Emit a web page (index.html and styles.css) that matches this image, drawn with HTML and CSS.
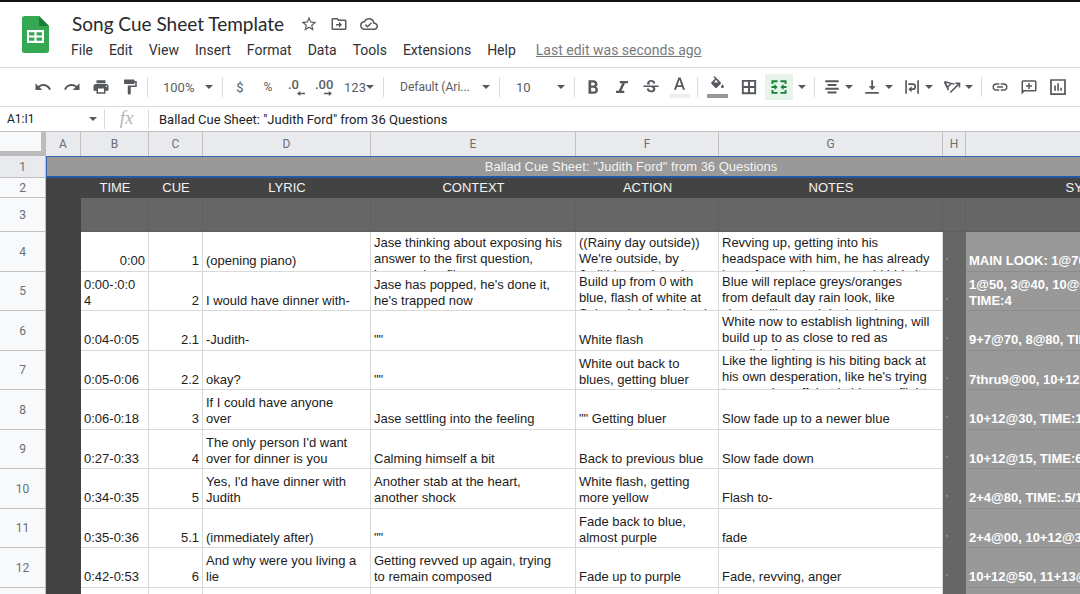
FILE: index.html
```html
<!DOCTYPE html>
<html lang="en">
<head>
<meta charset="utf-8">
<title>Song Cue Sheet Template</title>
<link rel="stylesheet" href="styles.css">
</head>
<body>
<div class="app">
<header class="header">
  <svg class="logo" viewBox="0 0 27 37" aria-hidden="true"><path fill="#34a853" d="M2.500 0H17l10 10v24.500a2.500 2.500 0 0 1-2.500 2.500h-22A2.500 2.500 0 0 1 0 34.500v-32A2.500 2.500 0 0 1 2.500 0z"/><path fill="#188038" d="M17 0l10 10H17z"/><path fill="#fff" fill-rule="evenodd" d="M5 14h17v13H5zM7 16.200v3.200h5.400v-3.200zm7.600 0v3.200H20v-3.200zM7 21.600v3.200h5.400v-3.200zm7.600 0v3.200H20v-3.200z"/></svg>
  <div class="heading">
    <div class="title-row">
      <h1 class="title">Song Cue Sheet Template</h1>
      <button class="title-btn" aria-label="Star"><svg viewBox="0 0 24 24"><path d="M22 9.240l-7.190-.62L12 2 9.190 8.630 2 9.240l5.460 4.730L5.820 21 12 17.270 18.180 21l-1.630-7.030L22 9.240zM12 15.400l-3.760 2.270 1-4.280-3.320-2.880 4.380-.38L12 6.100l1.710 4.040 4.380.38-3.320 2.880 1 4.280L12 15.400z"/></svg></button>
      <button class="title-btn" aria-label="Move"><svg viewBox="0 0 24 24"><path d="M20 6h-8l-2-2H4c-1.100 0-2 .9-2 2v12c0 1.100.9 2 2 2h16c1.100 0 2-.9 2-2V8c0-1.100-.9-2-2-2zm0 12H4V6h5.170l2 2H20v10zm-8-1l4-4-4-4v3H8v2h4z"/></svg></button>
      <button class="title-btn" aria-label="Document status"><svg viewBox="0 0 24 24"><path d="M19.350 10.040A7.490 7.490 0 0 0 12 4C9.110 4 6.600 5.640 5.350 8.040A5.994 5.994 0 0 0 0 14c0 3.310 2.690 6 6 6h13c2.760 0 5-2.240 5-5 0-2.640-2.050-4.780-4.650-4.960zM19 18H6c-2.210 0-4-1.790-4-4 0-2.050 1.530-3.760 3.560-3.970l1.070-.11.5-.95A5.469 5.469 0 0 1 12 6c2.620 0 4.880 1.860 5.390 4.430l.3 1.500 1.530.11A2.980 2.980 0 0 1 22 15c0 1.650-1.350 3-3 3zm-9-3.820l-2.090-2.090L6.500 13.500 10 17l6.010-6.010-1.410-1.410z"/></svg></button>
    </div>
    <nav class="menus">
      <button>File</button><button>Edit</button><button>View</button><button>Insert</button><button>Format</button><button>Data</button><button>Tools</button><button>Extensions</button><button>Help</button>
      <a class="last-edit" href="#">Last edit was seconds ago</a>
    </nav>
  </div>
</header>

<div class="toolbar" role="toolbar">
  <button class="tool" aria-label="Undo"><svg viewBox="0 0 24 24"><path d="M12.500 8c-2.650 0-5.050.99-6.900 2.600L2 7v9h9l-3.620-3.620c1.390-1.160 3.160-1.880 5.120-1.880 3.540 0 6.550 2.310 7.600 5.500l2.370-.78C21.080 11.030 17.150 8 12.500 8z"/></svg></button>
  <button class="tool" aria-label="Redo"><svg viewBox="0 0 24 24"><path d="M18.400 10.600C16.550 8.990 14.150 8 11.500 8c-4.650 0-8.580 3.030-9.960 7.220L3.900 16a8.002 8.002 0 0 1 7.600-5.500c1.950 0 3.730.72 5.120 1.880L13 16h9V7l-3.600 3.600z"/></svg></button>
  <button class="tool" aria-label="Print"><svg viewBox="0 0 24 24"><path d="M19 8H5c-1.660 0-3 1.340-3 3v6h4v4h12v-4h4v-6c0-1.660-1.340-3-3-3zm-3 11H8v-5h8v5zm3-7c-.55 0-1-.45-1-1s.45-1 1-1 1 .45 1 1-.45 1-1 1zm-1-9H6v4h12V3z"/></svg></button>
  <button class="tool" aria-label="Paint format"><svg viewBox="0 0 24 24"><path d="M18 4V3c0-.55-.45-1-1-1H5c-.55 0-1 .45-1 1v4c0 .55.450 1 1 1h12c.55 0 1-.45 1-1V6h1v4H9v11c0 .55.450 1 1 1h2c.55 0 1-.45 1-1v-9h8V4h-3z"/></svg></button>
  <span class="sep"></span>
  <span class="drop"><select aria-label="Zoom"><option>100%</option></select><i class="caret"></i></span>
  <span class="sep"></span>
  <button class="tool num">$</button>
  <button class="tool num small">%</button>
  <button class="tool num decimal" aria-label="Decrease decimal places">.0<svg viewBox="0 0 10 6"><path d="M10 2.200H4V0L0 3l4 3V3.800h6z"/></svg></button>
  <button class="tool num decimal more" aria-label="Increase decimal places">.00<svg viewBox="0 0 10 6"><path d="M0 2.200h6V0l4 3-4 3V3.800H0z"/></svg></button>
  <button class="tool formats">123<i class="caret"></i></button>
  <span class="sep"></span>
  <span class="drop font"><select aria-label="Font"><option>Default (Ari...</option></select><i class="caret"></i></span>
  <span class="sep"></span>
  <span class="drop size"><select aria-label="Font size"><option>10</option></select><i class="caret"></i></span>
  <span class="sep"></span>
  <button class="tool" aria-label="Bold"><svg viewBox="0 0 24 24"><path d="M16 11.600c1.200-.8 2-2 2-3.300C18 5.300 15.800 3 12.800 3H6v18h7.600c2.800 0 5-2.300 5-5.100 0-2-1-3.600-2.600-4.300zM9.500 6h3c1.100 0 2 .9 2 2s-.9 2-2 2h-3zm3.500 12H9.500v-5H13c1.400 0 2.300 1.100 2.300 2.500S14.400 18 13 18z"/></svg></button>
  <button class="tool" aria-label="Italic"><svg viewBox="0 0 24 24"><path d="M9 4v3h3.200l-4.500 10H4v3h11v-3h-3.600l4.500-10H20V4z"/></svg></button>
  <button class="tool" aria-label="Strikethrough"><svg viewBox="0 0 24 24"><path d="M7.240 8.750c-.26-.48-.39-1.030-.39-1.670 0-2.500 2.200-4.580 5.400-4.580 3.300 0 5.400 1.900 5.400 4.700h-3c0-1.400-.9-2.200-2.400-2.200-1.600 0-2.400.9-2.400 1.900 0 .9.600 1.400 2 1.850H7.240zM22 12v-2H2v2h9.600c1.700.6 3.200 1 3.200 2.600 0 1.200-.9 2-2.500 2-1.800 0-2.900-.9-2.900-2.600h-3c0 3.300 2.600 5.100 5.900 5.100 3.400 0 5.500-1.800 5.500-4.500 0-1-.2-1.900-.7-2.600z"/></svg></button>
  <button class="tool color" aria-label="Text color"><svg viewBox="0 0 24 24"><path d="M10.500 2L4.200 19.500h3l1.300-3.800h7l1.300 3.800h3L13.500 2zM9.400 13.200L12 5.400l2.600 7.800z"/></svg><i class="swatch light"></i></button>
  <span class="sep"></span>
  <button class="tool wide color" aria-label="Fill color"><svg viewBox="0 0 24 24"><path d="M16.560 8.940L7.620 0 6.210 1.410l2.380 2.380-5.150 5.150a1.490 1.490 0 0 0 0 2.120l5.500 5.500c.29.290.68.440 1.060.44s.77-.15 1.060-.44l5.500-5.500c.59-.58.59-1.530 0-2.120zM7 9l3-3.800L13 9zM19 11.500s-2 2.170-2 3.500c0 1.100.9 2 2 2s2-.9 2-2c0-1.330-2-3.500-2-3.500z"/></svg><i class="swatch"></i></button>
  <button class="tool wide" aria-label="Borders"><svg viewBox="0 0 24 24"><path fill-rule="evenodd" d="M2.500 2.500h19v19h-19zm2.500 2.500v5.700h5.700V5zm8.300 0v5.700H19V5zM5 13.300V19h5.700v-5.700zm8.300 0V19H19v-5.700z"/></svg></button>
  <button class="tool active" aria-label="Merge cells" aria-pressed="true"><svg viewBox="0 0 24 24"><path d="M2 3h8v2.500H4.500V8H2zM14 3h8v5h-2.500V5.500H14zM2 16h2.500v2.500H10V21H2zM19.500 16H22v5h-8v-2.500h5.500zM2 10.800h4V8l4 4-4 4v-2.800H2zM22 10.800h-4V8l-4 4 4 4v-2.800h4z"/></svg></button>
  <button class="tool slim" aria-label="Merge type"><i class="caret"></i></button>
  <span class="sep"></span>
  <button class="tool pair" aria-label="Horizontal align"><svg viewBox="0 0 24 24"><path d="M3 3h18v2.500H3zM6 8h12v2.500H6zM3 13h18v2.500H3zM6 18h12v2.500H6z"/></svg><i class="caret"></i></button>
  <button class="tool pair" aria-label="Vertical align"><svg viewBox="0 0 24 24"><path d="M11 3h2.400v8H17l-4.800 5L7.400 11H11zM3 18.500h18V21H3z"/></svg><i class="caret"></i></button>
  <button class="tool pair" aria-label="Text wrapping"><svg viewBox="0 0 24 24"><path d="M3 3h2.200v18H3zM19 3h2.200v18H19zM7 7h6a4.500 4.500 0 0 1 0 9h-1.500v3L7 15l4.500-4v2.800H13a2.200 2.200 0 0 0 0-4.500H7z"/></svg><i class="caret"></i></button>
  <button class="tool pair" aria-label="Text rotation"><svg viewBox="0 0 24 24"><path fill-rule="evenodd" d="M1 5.500L2.500 4 16 7.500l-1.600 1.600-3-.8-4.200 4.200.8 3-1.500 1.600zM4.300 6.800l2 4 3-3zM9 18.500L19.500 8H16.500V6H23v6.500h-2V9.500L10.500 20z"/></svg><i class="caret"></i></button>
  <span class="sep"></span>
  <button class="tool" aria-label="Insert link"><svg viewBox="0 0 24 24"><path d="M3.900 12c0-1.710 1.390-3.100 3.100-3.100h4V7H7a5 5 0 0 0 0 10h4v-1.900H7c-1.710 0-3.100-1.390-3.100-3.100zM8 13h8v-2H8v2zm9-6h-4v1.900h4c1.710 0 3.100 1.390 3.100 3.100s-1.390 3.100-3.100 3.100h-4V17h4a5 5 0 0 0 0-10z"/></svg></button>
  <button class="tool" aria-label="Insert comment"><svg viewBox="0 0 24 24"><path fill-rule="evenodd" d="M4 3h16a2 2 0 0 1 2 2v11a2 2 0 0 1-2 2H6l-4 4V5a2 2 0 0 1 2-2zm0 2v11h16V5zm7 1.500h2v3h3v2h-3v3h-2v-3H8v-2h3z"/></svg></button>
  <button class="tool" aria-label="Insert chart"><svg viewBox="0 0 24 24"><path fill-rule="evenodd" d="M1.500 1.500h21v21h-21zm2.300 2.300v16.400h16.400V3.800zM7 10h2.200v7H7zM11 7h2.200v10H11zM15 13h2.200v4H15z"/></svg></button>
</div>

<div class="formula-bar">
  <label class="name-box"><input aria-label="Name box" value="A1:I1"><i class="caret"></i></label>
  <label class="fx" for="formula">fx</label>
  <input id="formula" class="formula" value='Ballad Cue Sheet: "Judith Ford" from 36 Questions'>
</div>

<main class="grid">
<table class="sheet">
<colgroup><col class="c-head"><col class="c-a"><col class="c-b"><col class="c-c"><col class="c-d"><col class="c-e"><col class="c-f"><col class="c-g"><col class="c-h"><col class="c-i"></colgroup>
<thead><tr><td class="corner"></td><th>A</th><th>B</th><th>C</th><th>D</th><th>E</th><th>F</th><th>G</th><th>H</th><th></th></tr></thead>
<tbody>
<tr class="banner"><th class="on">1</th><td colspan="9">Ballad Cue Sheet: "Judith Ford" from 36 Questions</td></tr>
<tr class="labels"><th>2</th><td></td><td>TIME</td><td>CUE</td><td>LYRIC</td><td>CONTEXT</td><td>ACTION</td><td>NOTES</td><td></td><td>SYNTAX</td></tr>
<tr class="spacer"><th>3</th><td class="edge"></td><td></td><td></td><td></td><td></td><td></td><td></td><td></td><td></td></tr>
</tbody>
<tbody class="cues">
<tr><th>4</th><td></td><td class="right"><div>0:00</div></td><td><div>1</div></td><td><div>(opening piano)</div></td><td><div class="over">Jase thinking about exposing his<br>answer to the first question,<br>keeps a low flip</div></td><td><div class="over">((Rainy day outside))<br>We're outside, by<br>Judith's porch and</div></td><td><div class="over">Revving up, getting into his<br>headspace with him, he has already<br>been for months or so could hide it</div></td><td><div>'</div></td><td><div>MAIN LOOK: 1@70</div></td></tr>
<tr><th>5</th><td></td><td><div>0:00-:0:0<br>4</div></td><td><div>2</div></td><td><div>I would have dinner with-</div></td><td><div>Jase has popped, he's done it,<br>he's trapped now</div></td><td><div class="over">Build up from 0 with<br>blue, flash of white at<br>Solo and defaults back</div></td><td><div class="over">Blue will replace greys/oranges<br>from default day rain look, like<br>shock will spread dusk and</div></td><td><div>'</div></td><td><div>1@50, 3@40, 10@50<br>TIME:4</div></td></tr>
<tr><th>6</th><td></td><td><div>0:04-0:05</div></td><td><div>2.1</div></td><td><div>-Judith-</div></td><td><div>""</div></td><td><div>White flash</div></td><td><div class="over">White now to establish lightning, will<br>build up to as close to red as<br>possible for laws</div></td><td><div>'</div></td><td><div>9+7@70, 8@80, TIME:0</div></td></tr>
<tr><th>7</th><td></td><td><div>0:05-0:06</div></td><td><div>2.2</div></td><td><div>okay?</div></td><td><div>""</div></td><td><div>White out back to<br>blues, getting bluer</div></td><td><div class="over">Like the lighting is his biting back at<br>his own desperation, like he's trying<br>to scare her off, but in his own flight</div></td><td><div>'</div></td><td><div>7thru9@00, 10+12@40</div></td></tr>
<tr><th>8</th><td></td><td><div>0:06-0:18</div></td><td><div>3</div></td><td><div>If I could have anyone<br>over</div></td><td><div>Jase settling into the feeling</div></td><td><div>"" Getting bluer</div></td><td><div>Slow fade up to a newer blue</div></td><td><div>'</div></td><td><div>10+12@30, TIME:12</div></td></tr>
<tr><th>9</th><td></td><td><div>0:27-0:33</div></td><td><div>4</div></td><td><div>The only person I'd want<br>over for dinner is you</div></td><td><div>Calming himself a bit</div></td><td><div>Back to previous blue</div></td><td><div>Slow fade down</div></td><td><div>'</div></td><td><div>10+12@15, TIME:6</div></td></tr>
<tr><th>10</th><td></td><td><div>0:34-0:35</div></td><td><div>5</div></td><td><div>Yes, I'd have dinner with<br>Judith</div></td><td><div>Another stab at the heart,<br>another shock</div></td><td><div>White flash, getting<br>more yellow</div></td><td><div>Flash to-</div></td><td><div>'</div></td><td><div>2+4@80, TIME:.5/1</div></td></tr>
<tr><th>11</th><td></td><td><div>0:35-0:36</div></td><td><div>5.1</div></td><td><div>(immediately after)</div></td><td><div>""</div></td><td><div>Fade back to blue,<br>almost purple</div></td><td><div>fade</div></td><td><div>'</div></td><td><div>2+4@00, 10+12@30</div></td></tr>
<tr><th>12</th><td></td><td><div>0:42-0:53</div></td><td><div>6</div></td><td><div>And why were you living a<br>lie</div></td><td><div>Getting revved up again, trying<br>to remain composed</div></td><td><div>Fade up to purple</div></td><td><div>Fade, revving, anger</div></td><td><div>'</div></td><td><div>10+12@50, 11+13@40</div></td></tr>
<tr><th></th><td></td><td></td><td></td><td></td><td></td><td></td><td></td><td></td><td></td></tr>
</tbody>
</table>
</main>
</div>
</body>
</html>
```
FILE: styles.css
```css
* { box-sizing: border-box; }
body { margin: 0; background: #fff; color: #202124; font-family: Roboto, "Liberation Sans", sans-serif; }
button, input, select { margin: 0; padding: 0; border: 0; background: none; color: inherit; font: inherit; outline: 0; }
svg { display: block; fill: #55595e; }

.app { display: flex; flex-direction: column; height: 100vh; overflow: hidden; border-top: 2px solid #111; }

.header { display: flex; flex: none; gap: 22px; padding: 12px 22px 7px; border-bottom: 1px solid #dadce0; }
.logo { width: 27px; height: 37px; margin-top: 2px; }
.title-row { display: flex; align-items: center; height: 20px; gap: 12px; }
.title { margin: 0 4px 0 1px; font: 400 19px/20px Lato, sans-serif; color: #26282b; white-space: nowrap; }
.title-btn { width: 18px; height: 18px; }
.title-btn svg { width: 18px; height: 18px; }
.menus { display: flex; align-items: center; gap: 16px; height: 20px; margin-top: 6px; font-size: 14px; line-height: 20px; color: #303236; white-space: nowrap; }
.last-edit { margin-left: 4px; color: #777b80; }

.toolbar { display: flex; flex: none; align-items: center; height: 38px; padding-left: 28px; color: #5a5e63; font-size: 13px; }
.tool { display: flex; flex: none; align-items: center; justify-content: center; width: 29px; height: 26px; }
.tool svg { width: 18px; height: 18px; }
.sep { flex: none; width: 1px; height: 20px; margin: 0 3px; background: #dadce0; }
.caret { flex: none; width: 0; height: 0; border: 4px solid transparent; border-top-color: #55595e; border-bottom: 0; }
.drop { display: flex; flex: none; align-items: center; width: 68px; padding: 0 6px 0 12px; }
.drop select { flex: 1; min-width: 0; appearance: none; }
.drop.font { width: 109px; padding-left: 13px; font-size: 12px; }
.drop.size { padding-left: 13px; }
.num { width: 28px; }
.small { font-size: 12px; }
.decimal { flex-direction: column; align-items: flex-start; padding-left: 6px; line-height: 13px; font-weight: 500; }
.tool.decimal svg { width: 8px; height: 5px; margin-left: 9px; }
.more { padding-left: 5px; }
.formats { width: 42px; }
.wide { width: 32px; }
.color { flex-direction: column; gap: 1px; }
.color svg { width: 17px; height: 17px; }
.swatch { width: 21px; height: 4px; background: #999; }
.light { background: #efefef; }
.active { width: 28px; background: #e6f4ea; }
.active svg { fill: #188038; }
.slim { width: 18px; }
.pair { width: 40px; gap: 4px; }

.formula-bar { display: flex; flex: none; align-items: center; height: 25px; border-top: 1px solid #dadce0; font-size: 13px; }
.name-box { display: flex; align-items: center; width: 105px; height: 20px; padding: 0 7px; border-right: 1px solid #dadce0; }
.name-box input { flex: 1; min-width: 0; font-size: 12px; }
.fx { width: 44px; height: 20px; border-right: 1px solid #dadce0; color: #b4b4b4; font: italic 19px/18px "Liberation Serif", serif; text-align: center; }
.formula { flex: 1; min-width: 0; padding: 0 10px; }

.grid { flex: 1; min-height: 0; overflow: hidden; }
.sheet { width: 1216px; table-layout: fixed; border-collapse: separate; border-spacing: 0; color: #1c1c1c; font: 13px/16px "Liberation Sans", Arial, sans-serif; }
.c-head { width: 46px; }
.c-a { width: 35px; }
.c-b { width: 68px; }
.c-c { width: 54px; }
.c-d { width: 168px; }
.c-e { width: 205px; }
.c-f { width: 143px; }
.c-g { width: 224px; }
.c-h { width: 23px; }
.c-i { width: 250px; }
.sheet td, .sheet th { padding: 0; }
.sheet th { border-right: 1px solid #c0c0c0; border-bottom: 1px solid #c0c0c0; background: #f8f9fa; color: #6b6f74; font: 12px/14px Roboto, sans-serif; }
.sheet thead th { height: 25px; border-top: 1px solid #c0c0c0; border-bottom: 0; background: #e8eaed; }
.sheet .corner { border-top: 1px solid #c0c0c0; border-right: 5px solid #bcbcbc; border-bottom: 5px solid #bcbcbc; background: #f8f9fa; }
.sheet th.on { background: #e8eaed; }

.banner td { height: 22px; border: 1px solid #3668b4; border-bottom: 2px solid #2459a8; background: #999; color: #f3f3f3; text-align: center; }
.labels td { height: 20px; background: #434343; color: #f3f3f3; text-align: center; }
.spacer td { height: 34px; border-right: 1px solid #606060; border-bottom: 1px solid #606060; background: #666; }
.sheet .edge, .cues td:nth-child(2) { border-color: #434343; background: #434343; }

.cues td { height: 40px; border-right: 1px solid #d9d9d9; border-bottom: 1px solid #d9d9d9; white-space: nowrap; }
.cues tr:nth-child(even) td { height: 39px; }
.cues div { display: flow-root; align-content: end; height: 39px; padding: 0 3px 2px; overflow: hidden; }
.cues tr:nth-child(even) div { height: 38px; padding-bottom: 1px; }
.cues .over { align-content: start; padding-top: 3px; padding-bottom: 0; }
.cues tr:nth-child(even) .over { padding-top: 2px; padding-bottom: 0; }
.cues .right, .cues td:nth-child(4) { text-align: right; }
.cues td:nth-child(9) { border-color: #666; background: #666; color: #bbb; font-size: 9px; }
.cues td:nth-child(10) { border-color: #8c8c8c; background: #999; color: #fff; font-weight: 700; }
```
